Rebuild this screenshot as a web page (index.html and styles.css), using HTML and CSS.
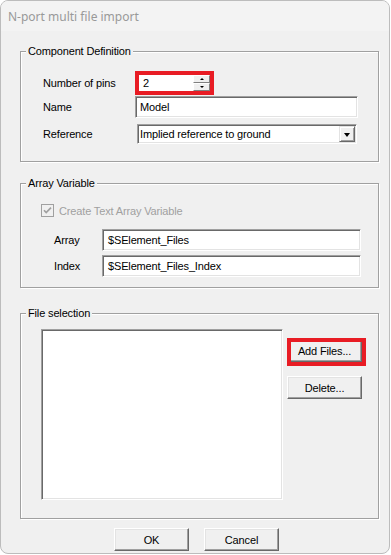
FILE: index.html
```html
<!DOCTYPE html>
<html>
<head>
<meta charset="utf-8">
<link rel="stylesheet" href="styles.css">
</head>
<body>
<div class="window">
  <div class="titlebar">N-port multi file import</div>
  <div class="content">
    <fieldset class="group g1">
      <legend>Component Definition</legend>
      <div class="gbody g1-body">
        <div class="row r-pins">
          <span class="lbl1">Number of pins</span>
          <div class="hl hl-pins">
            <div class="spin">
              <span class="val">2</span>
              <div class="spin-btns"><span class="sb up"></span><span class="sb down"></span></div>
            </div>
          </div>
        </div>
        <div class="row r-name">
          <span class="lbl1">Name</span>
          <div class="field name">Model</div>
        </div>
        <div class="row r-ref">
          <span class="lbl1">Reference</span>
          <div class="combo">
            <span class="combo-text">Implied reference to ground</span>
            <span class="drop"><span class="tri"></span></span>
          </div>
        </div>
      </div>
    </fieldset>

    <fieldset class="group g2">
      <legend>Array Variable</legend>
      <div class="gbody g2-body">
        <div class="row r-check">
          <svg class="check" width="13" height="13" viewBox="0 0 13 13">
            <rect x="0.5" y="0.5" width="12" height="12" fill="#f0f0f0" stroke="#a0a0a0"/>
            <polyline points="3,6.2 5.2,8.6 10,3.6" fill="none" stroke="#a0a0a0" stroke-width="1.7"/>
          </svg>
          <span class="disabled">Create Text Array Variable</span>
        </div>
        <div class="row r-arr">
          <span class="lbl2">Array</span>
          <div class="field arr">$SElement_Files</div>
        </div>
        <div class="row r-idx">
          <span class="lbl2">Index</span>
          <div class="field arr">$SElement_Files_Index</div>
        </div>
      </div>
    </fieldset>

    <fieldset class="group g3">
      <legend>File selection</legend>
      <div class="gbody g3-body">
        <div class="field listbox"></div>
        <div class="side">
          <div class="hl hl-add"><button class="btn add">Add Files...</button></div>
          <button class="btn del">Delete...</button>
        </div>
      </div>
    </fieldset>

    <div class="actions">
      <button class="btn">OK</button>
      <button class="btn">Cancel</button>
    </div>
  </div>
</div>
</body>
</html>
```
FILE: styles.css
```css
* { box-sizing: border-box; }
html, body { margin: 0; background: #ffffff; }
body {
  font-family: "Liberation Sans", Arial, sans-serif;
  font-size: 11px;
  letter-spacing: -0.15px;
  color: #000;
}
.window {
  width: 390px;
  height: 554px;
  border: 1px solid #bcbcbc;
  border-radius: 8px;
  background: #f0f0f0;
  overflow: hidden;
  display: flex;
  flex-direction: column;
}
.titlebar {
  height: 30px;
  flex: none;
  background: #f3f3f3;
  color: #999999;
  font-family: "Noto Sans", "Open Sans", sans-serif;
  font-size: 12px;
  letter-spacing: 0;
  padding-left: 7px;
  display: flex;
  align-items: center;
}
.content {
  padding: 13px 10px 0 19px;
  display: flex;
  flex-direction: column;
}
.group {
  margin: 0;
  padding: 0;
  min-width: 0;
  border: 1px solid #a0a0a0;
  box-shadow: inset 1px 1px 0 #ffffff, 1px 1px 0 #ffffff;
}
.group legend {
  margin-left: 5px;
  padding: 0 2px;
  line-height: 14px;
  background: #f0f0f0;
}
.g2 { margin-top: 14px; }
.g3 { margin-top: 18px; }

.row { display: flex; align-items: center; }

/* Component Definition */
.g1-body { padding: 13px 0 17px 22px; }
.lbl1 { width: 92px; flex: none; }
.r-pins { height: 24px; }
.r-name { margin-top: 1px; }
.r-ref { margin-top: 6px; }

.hl { border: 4px solid #e81c24; flex: none; }
.hl-pins { width: 79px; height: 24px; }
.spin { display: flex; height: 100%; background: #fff; }
.spin .val { flex: 1; padding-left: 4px; line-height: 16px; }
.spin-btns { width: 17px; display: flex; flex-direction: column; }
.sb {
  flex: 1;
  border: 1px solid;
  border-color: #ffffff #808080 #808080 #ffffff;
  background: #f0f0f0;
  display: flex;
  align-items: center;
  justify-content: center;
}
.sb.up::after {
  content: "";
  border-left: 2px solid transparent;
  border-right: 2px solid transparent;
  border-bottom: 2px solid #000;
}
.sb.down::after {
  content: "";
  border-left: 2px solid transparent;
  border-right: 2px solid transparent;
  border-top: 2px solid #000;
}

.field {
  background: #ffffff;
  border: 1px solid;
  border-color: #a0a0a0 #ffffff #ffffff #a0a0a0;
  box-shadow: inset 1px 1px 0 #696969, inset -1px -1px 0 #e3e3e3;
}
.name {
  width: 223px;
  height: 22px;
  padding-left: 4px;
  line-height: 20px;
}
.combo {
  margin-left: 2px;
  width: 220px;
  height: 20px;
  padding: 1px;
  display: flex;
  align-items: center;
  background: #fff;
  border: 1px solid;
  border-color: #a0a0a0 #ffffff #ffffff #a0a0a0;
  box-shadow: inset 1px 1px 0 #696969, inset -1px -1px 0 #e3e3e3;
}
.combo-text { flex: 1; padding-left: 1px; }
.drop {
  width: 16px;
  height: 16px;
  flex: none;
  background: #f0f0f0;
  border: 1px solid;
  border-color: #e3e3e3 #696969 #696969 #e3e3e3;
  box-shadow: inset 1px 1px 0 #fff, inset -1px -1px 0 #a0a0a0;
  display: flex;
  align-items: center;
  justify-content: center;
}
.tri {
  border-left: 3.5px solid transparent;
  border-right: 3.5px solid transparent;
  border-top: 4px solid #000;
  margin-top: 1px;
}

/* Array Variable */
.g2-body { padding: 14px 0 10px 20px; }
.r-check { height: 13px; }
.check { flex: none; margin-right: 5px; }
.disabled { color: #a0a0a0; }
.r-arr { margin-top: 12px; }
.r-idx { margin-top: 4px; }
.lbl2 { width: 48px; margin-left: 13px; flex: none; }
.arr {
  width: 259px;
  height: 22px;
  padding-left: 5px;
  line-height: 20px;
}

/* File selection */
.g3-body {
  padding: 9px 0 18px 20px;
  display: flex;
  align-items: flex-start;
}
.listbox { width: 242px; height: 171px; flex: none; }
.side {
  margin-left: 4px;
  margin-top: 9px;
  display: flex;
  flex-direction: column;
}
.hl-add { width: 79px; height: 28px; overflow: hidden; }
.btn {
  width: 75px;
  height: 23px;
  padding: 0;
  font: inherit;
  letter-spacing: inherit;
  color: #000;
  background: #f0f0f0;
  border: 1px solid;
  border-color: #ffffff #696969 #696969 #ffffff;
  box-shadow: inset -1px -1px 0 #a0a0a0, inset 1px 1px 0 #e3e3e3;
  display: flex;
  align-items: center;
  justify-content: center;
  flex: none;
}
.add { margin-left: -4px; margin-top: -3px; }
.del { margin-top: 10px; }

.actions {
  margin-top: 9px;
  padding-left: 94px;
  display: flex;
  gap: 15px;
}
```
